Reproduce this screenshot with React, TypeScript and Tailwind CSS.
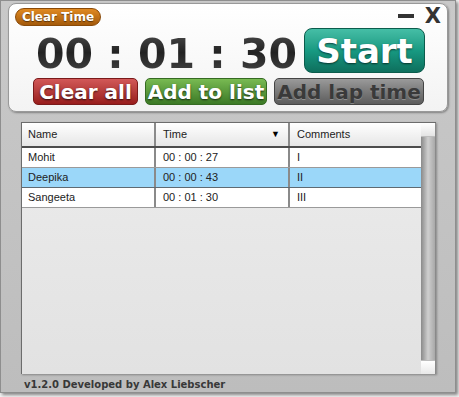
import React from "react";

const rows = [
  { name: "Mohit", time: "00 : 00 : 27", comment: "I", selected: false },
  { name: "Deepika", time: "00 : 00 : 43", comment: "II", selected: true },
  { name: "Sangeeta", time: "00 : 01 : 30", comment: "III", selected: false },
];

const bold = "font-['DejaVu_Sans',Verdana,sans-serif] font-bold";

export default function App() {
  return (
    <div className="w-[459px] h-[397px] bg-[#f2f2f2] overflow-hidden">
      <div className="w-[456px] h-[393px] bg-gradient-to-b from-[#c9c9c9] to-[#bdbdbd] border border-[#8e8e8e] shadow-[2px_2px_3px_rgba(0,0,0,0.45)] flex flex-col">
        {/* Timer panel */}
        <div className="ml-[7px] mt-[2px] w-[440px] h-[109px] rounded-[8px] border border-[#999] bg-gradient-to-b from-white to-[#f3f3f3] shadow-[1px_1px_2px_rgba(0,0,0,0.35)] flex flex-col">
          <div className="h-[24px] flex items-start justify-between">
            <div
              className={`ml-[6px] mt-[4px] w-[86px] h-[18px] rounded-full border border-[#8a4a08] bg-gradient-to-b from-[#e08a22] to-[#a45a0a] text-white text-[12px] leading-[16px] text-center [text-shadow:0_1px_1px_rgba(0,0,0,0.5)] ${bold}`}
            >
              Clear Time
            </div>
            <div className="flex items-center mr-[6px] mt-[1px] h-[22px]">
              <div className="w-[16px] h-[4px] bg-[#333] mr-[11px]" />
              <span className={`text-[21px] leading-[22px] text-[#333] ${bold}`}>X</span>
            </div>
          </div>
          <div className="h-[45px] flex items-start">
            <div
              className={`ml-[27px] pt-[4px] text-[41px] leading-[45px] whitespace-pre bg-gradient-to-b from-[#555] via-[#222] to-[#4a4a4a] bg-clip-text text-transparent ${bold}`}
            >
              00 : 01 : 30
            </div>
            <button
              className={`ml-auto mr-[22px] w-[121px] h-[45px] rounded-[8px] border border-[#0b5c4c] bg-gradient-to-b from-[#45bea6] via-[#179a82] to-[#0e6f5d] text-white text-[34px] leading-[40px] [text-shadow:0_1px_2px_rgba(0,0,0,0.6)] ${bold}`}
            >
              Start
            </button>
          </div>
          <div className="mt-[5px] flex items-start gap-[7px] pl-[24px]">
            <button
              className={`w-[105px] h-[27px] rounded-[5px] border border-[#7a1a1a] bg-gradient-to-b from-[#d25858] to-[#981c1c] text-white text-[20px] leading-[24px] [text-shadow:0_1px_2px_rgba(0,0,0,0.7)] ${bold}`}
            >
              Clear all
            </button>
            <button
              className={`w-[122px] h-[27px] rounded-[5px] border border-[#356a22] bg-gradient-to-b from-[#78ba52] to-[#3c7a26] text-white text-[20px] leading-[24px] [text-shadow:0_1px_2px_rgba(0,0,0,0.7)] ${bold}`}
            >
              Add to list
            </button>
            <button
              className={`w-[150px] h-[27px] rounded-[5px] border border-[#444] bg-gradient-to-b from-[#9a9a9a] to-[#5c5c5c] text-[#3a3a3a] text-[20px] leading-[24px] [text-shadow:0_1px_0_rgba(255,255,255,0.25)] ${bold}`}
            >
              Add lap time
            </button>
          </div>
        </div>

        {/* List */}
        <div className="ml-[20px] mt-[10px] w-[415px] h-[252px] flex border-l border-t border-[#6c6c6c] shadow-[1px_1px_2px_rgba(0,0,0,0.3)]">
          <div className="w-[399px] h-full bg-gradient-to-b from-[#ececec] to-[#e2e2e2] font-['Liberation_Sans',Tahoma,sans-serif] text-[11px] text-[#222]">
            <div className="h-[25px] flex bg-gradient-to-b from-white to-[#e6e6e6] border-b-2 border-[#4c4c4c]">
              <div className="w-[132px] pl-[6px] flex items-center">Name</div>
              <div className="w-[134px] pl-[7px] pr-[8px] flex items-center justify-between border-l-2 border-[#8a8a8a]">
                <span>Time</span>
                <span className="text-[9px] text-black">▼</span>
              </div>
              <div className="flex-1 pl-[7px] flex items-center border-l-2 border-[#8a8a8a]">Comments</div>
            </div>
            {rows.map((r) => (
              <div
                key={r.name}
                className={`h-[20px] flex border-b ${r.selected ? "bg-[#9bd7f9] border-[#5e6a72]" : "bg-white border-[#9a9a9a]"}`}
              >
                <div className="w-[132px] pl-[6px] flex items-center">{r.name}</div>
                <div className="w-[134px] pl-[7px] flex items-center border-l-2 border-[#8a8a8a]">{r.time}</div>
                <div className="flex-1 pl-[7px] flex items-center border-l-2 border-[#8a8a8a]">{r.comment}</div>
              </div>
            ))}
          </div>
          <div className="w-[15px] h-full flex flex-col bg-gradient-to-r from-[#8a8a8a] via-[#cfcfcf] to-[#a9a9a9] border-r border-[#8a8a8a]">
            <div className="h-[14px] bg-gradient-to-b from-white to-[#e4e4e4] border-b border-[#bdbdbd]" />
            <div className="flex-1" />
            <div className="h-[14px] bg-gradient-to-b from-white to-[#e8e8e8] border-t border-[#bdbdbd]" />
          </div>
        </div>

        <div className={`ml-[23px] mt-[5px] text-[10px] leading-[12px] text-[#383838] ${bold}`}>
          v1.2.0 Developed by Alex Liebscher
        </div>
      </div>
    </div>
  );
}
